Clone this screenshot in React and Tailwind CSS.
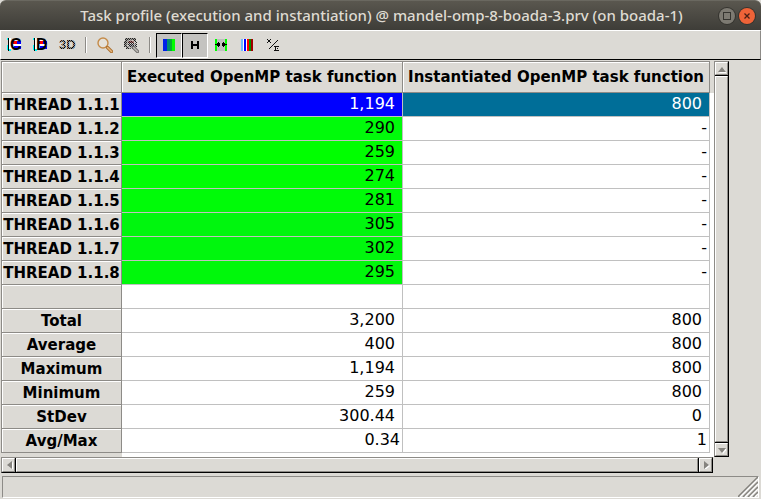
import React from "react";

const rows = [
  { label: "THREAD 1.1.1", cells: ["1,194", "800"], fills: ["bg-[#0000ff] text-white", "bg-[#006e98] text-white"] },
  { label: "THREAD 1.1.2", cells: ["290", "-"], fills: ["bg-[#00fb0a]", "bg-white"] },
  { label: "THREAD 1.1.3", cells: ["259", "-"], fills: ["bg-[#00ff00]", "bg-white"] },
  { label: "THREAD 1.1.4", cells: ["274", "-"], fills: ["bg-[#00fd05]", "bg-white"] },
  { label: "THREAD 1.1.5", cells: ["281", "-"], fills: ["bg-[#00fb08]", "bg-white"] },
  { label: "THREAD 1.1.6", cells: ["305", "-"], fills: ["bg-[#00f60e]", "bg-white"] },
  { label: "THREAD 1.1.7", cells: ["302", "-"], fills: ["bg-[#00f70d]", "bg-white"] },
  { label: "THREAD 1.1.8", cells: ["295", "-"], fills: ["bg-[#00f80b]", "bg-white"] },
  { label: "", cells: ["", ""] },
  { label: "Total", cells: ["3,200", "800"] },
  { label: "Average", cells: ["400", "800"] },
  { label: "Maximum", cells: ["1,194", "800"] },
  { label: "Minimum", cells: ["259", "800"] },
  { label: "StDev", cells: ["300.44", "0"] },
  { label: "Avg/Max", cells: ["0.34", "1"], tight: true },
];

function Icon({ children }) {
  return (
    <svg width="16" height="16" viewBox="0 0 16 16" shapeRendering="crispEdges" aria-hidden="true">
      {children}
    </svg>
  );
}

function LetterIcon({ letter }) {
  return (
    <Icon>
      <path d="M0 1h1v2h-1zM0 8h1v5h-1zM2 12h2v2h-2z" fill="#00ffff" />
      <path d="M1 1h1v13h-1z" fill="#000" />
      <path d="M2 1h2v11h-2zM4 3h10v9h-10z" fill="#fff" />
      <path d="M6 4h4v3h-4z" fill="#ff0000" />
      <path d="M10 4h4v3h-4zM7 9h7v3h-7z" fill="#0000ff" />
      <text x="3" y="13" fontFamily="Liberation Sans" fontWeight="bold" fontSize="16">
        {letter}
      </text>
    </Icon>
  );
}

function ThreeDIcon() {
  return (
    <svg width="18" height="16" viewBox="0 0 18 16" aria-hidden="true">
      <defs>
        <pattern id="dither" width="2" height="2" patternUnits="userSpaceOnUse">
          <rect width="2" height="2" fill="#8b8983" />
          <rect width="1" height="1" fill="#000" />
          <rect x="1" y="1" width="1" height="1" fill="#000" />
        </pattern>
      </defs>
      <text x="1" y="12" fontFamily="Liberation Sans" fontWeight="bold" fontSize="13" fill="url(#dither)">
        3D
      </text>
    </svg>
  );
}

function Magnifier({ muted }) {
  return (
    <svg width="16" height="16" viewBox="0 0 16 16" aria-hidden="true">
      {muted && (
        <g shapeRendering="crispEdges">
          <defs>
            <pattern id="dots" width="2" height="2" patternUnits="userSpaceOnUse">
              <rect width="1" height="1" fill="#222" />
              <rect x="1" y="1" width="1" height="1" fill="#222" />
            </pattern>
          </defs>
          <path d="M2 1h11v3h-2v-1h-6v7h3v2h-5v-2h-2v-6h1z" fill="#a3a19d" />
          <path d="M5 3h6v3h-6z" fill="#c07070" />
          <path d="M6 7h7v4h-7z" fill="#a9a9b4" />
          <path d="M2 1h11v3h1v6h-3v2h-8v-2h-2v-6h1z" fill="url(#dots)" />
        </g>
      )}
      {muted ? (
        <circle cx="8" cy="7" r="4" fill="none" stroke="#c9c7c2" strokeWidth="1" />
      ) : (
        <circle cx="6" cy="6" r="5" fill="#e5e1d9" stroke="#c58b49" strokeWidth="1.4" />
      )}
      <path d="M10.5 10.5l4 4" stroke={muted ? "#6b6966" : "#a96b28"} strokeWidth="3.2" strokeLinecap="round" />
      <path d="M10.5 10.5l4 4" stroke={muted ? "#bbb9b4" : "#e6b67c"} strokeWidth="1.6" strokeLinecap="round" />
    </svg>
  );
}

function GradientIcon() {
  return (
    <Icon>
      <path d="M2 2h4v12h-4z" fill="#0020e8" />
      <path d="M6 2h3v12h-3z" fill="#008c70" />
      <path d="M9 2h2v12h-2z" fill="#00b030" />
      <path d="M11 2h3v12h-3z" fill="#00ff00" />
    </Icon>
  );
}

function HorizontalIcon() {
  return (
    <Icon>
      <path d="M4 4h2v3h4v-3h2v8h-2v-3h-4v3h-2z" fill="#000" />
    </Icon>
  );
}

function ArrowsIcon() {
  return (
    <Icon>
      <path d="M4 2h8v12h-8z" fill="#c0c0c0" />
      <path d="M2 2h2v12h-2zM12 2h2v12h-2z" fill="#00ff00" />
      <path d="M2 7h2v-1h1v-1h1v1h1v3h-1v1h-1v-1h-1v-1h-2zM14 7h-2v-1h-1v-1h-1v1h-1v3h1v1h1v-1h1v-1h2z" fill="#000" />
    </Icon>
  );
}

function StripesIcon() {
  return (
    <Icon>
      <path d="M2 2h2v12h-2z" fill="#70b8ff" />
      <path d="M4 2h1v12h-1zM7 2h1v12h-1z" fill="#ffffff" />
      <path d="M5 2h2v12h-2z" fill="#0000ff" />
      <path d="M8 2h2v12h-2z" fill="#ff0000" />
      <path d="M10 2h2v12h-2z" fill="#009000" />
      <path d="M12 2h2v12h-2z" fill="#a00000" />
    </Icon>
  );
}

function FormulaIcon() {
  return (
    <Icon>
      <path
        d="M2 2h1v1h-1zM5 2h1v1h-1zM3 3h2v2h-2zM2 5h1v1h-1zM5 5h1v1h-1zM12 3h1v1h-1zM11 4h1v1h-1zM10 5h1v1h-1zM9 6h1v1h-1zM8 7h1v1h-1zM7 8h1v1h-1zM6 9h1v1h-1zM5 10h1v1h-1zM4 11h1v1h-1zM9 9h5v1h-5zM10 10h1v3h-1zM12 11h1v1h-1zM9 13h5v1h-5z"
        fill="#111"
      />
    </Icon>
  );
}

function ToolButton({ label, pressed, children }) {
  return (
    <button
      type="button"
      aria-label={label}
      aria-pressed={pressed}
      className={
        pressed
          ? "flex h-[25px] w-[26px] items-center justify-center border border-t-black border-l-black border-r-white border-b-white bg-[#c4c3c0] bg-clip-padding"
          : "flex h-[25px] w-[26px] items-center justify-center"
      }
    >
      {children}
    </button>
  );
}

function Separator() {
  return <div className="mx-[5px] h-4 w-0.5 border-l border-[#8d8b87] bg-white" />;
}

function Arrow({ dir }) {
  const paths = {
    up: "M0 7L4 2L8 7z",
    down: "M0 2L4 7L8 2z",
    left: "M7 0L2 4L7 8z",
    right: "M2 0L7 4L2 8z",
  };
  return (
    <svg width="8" height="8" viewBox="0 0 8 8" aria-hidden="true">
      <path d={paths[dir]} fill="#fff" transform="translate(1 1)" />
      <path d={paths[dir]} fill="#85837e" />
    </svg>
  );
}

const raised = "border border-t-white border-l-white border-r-[#8d8b87] border-b-[#8d8b87] bg-[#dcdad5]";

function ScrollBar({ vertical }) {
  return (
    <div
      className={
        vertical
          ? "flex w-[15px] shrink-0 flex-col border border-t-[#8d8b87] border-l-[#8d8b87] border-r-black border-b-black bg-black"
          : "mr-4 flex h-4 border border-t-[#8d8b87] border-l-[#8d8b87] border-r-black border-b-black bg-black"
      }
    >
      <button
        type="button"
        aria-label={vertical ? "Scroll up" : "Scroll left"}
        className={`${raised} flex shrink-0 items-center justify-center ${vertical ? "h-[13px]" : "w-[13px]"}`}
      >
        <Arrow dir={vertical ? "up" : "left"} />
      </button>
      <div className={`${raised} flex-1 ${vertical ? "my-px" : "mx-px"}`} />
      <button
        type="button"
        aria-label={vertical ? "Scroll down" : "Scroll right"}
        className={`${raised} flex shrink-0 items-center justify-center ${vertical ? "h-[13px]" : "w-[13px]"}`}
      >
        <Arrow dir={vertical ? "down" : "right"} />
      </button>
    </div>
  );
}

function ProfileTable() {
  const head = "border-r border-b border-[#8d8b87] bg-[#dcdad5] p-0 text-center text-[15px] leading-5 font-bold whitespace-nowrap shadow-[inset_1px_1px_0_#fff]";
  return (
    <table className="w-full table-fixed border-separate border-spacing-0 border-t border-l border-[#8d8b87]">
      <colgroup>
        <col className="w-[120px]" />
        <col className="w-[281px]" />
        <col />
      </colgroup>
      <thead>
        <tr className="h-[31px]">
          <td className={head} />
          <th scope="col" className={head}>Executed OpenMP task function</th>
          <th scope="col" className={head}>Instantiated OpenMP task function</th>
        </tr>
      </thead>
      <tbody>
        {rows.map((row, i) => (
          <tr key={i} className="h-6">
            <th scope="row" className={head}>{row.label}</th>
            {row.cells.map((value, j) => (
              <td
                key={j}
                className={`border-r border-b border-[#c0c0c0] bg-clip-padding py-0 text-right align-top text-base leading-[22px] ${
                  row.tight || value === "-" ? "pr-0.5" : "pr-[7px]"
                } ${row.fills ? row.fills[j] : "bg-white"}`}
              >
                {value}
              </td>
            ))}
          </tr>
        ))}
      </tbody>
    </table>
  );
}

export default function App() {
  return (
    <div className="flex min-h-screen flex-col bg-[#dcdad5] font-['DejaVu_Sans',sans-serif] text-black">
      <header className="flex h-[30px] items-center rounded-t-md border-t border-[#6a6860] bg-linear-to-b from-[#5a574f] to-[#3e3d38] pr-1.5">
        <div className="w-11 shrink-0" />
        <h1 className="flex-1 text-center font-['Noto_Sans',sans-serif] text-[15px] font-medium whitespace-nowrap text-[#dfdbd2]">
          Task profile (execution and instantiation) @ mandel-omp-8-boada-3.prv (on boada-1)
        </h1>
        <div className="flex shrink-0 gap-1">
          <button type="button" aria-label="Maximize" className="flex size-4 items-center justify-center rounded-full bg-[#7d7a72] ring-1 ring-[#35342f]">
            <span className="size-2 border border-[#35342f]" />
          </button>
          <button type="button" aria-label="Close" className="flex size-4 items-center justify-center rounded-full bg-[#ee6338] ring-1 ring-[#35342f]">
            <svg width="6" height="6" viewBox="0 0 6 6" aria-hidden="true">
              <path d="M0.5 0.5l5 5M5.5 0.5l-5 5" stroke="#4a2015" strokeWidth="1.3" />
            </svg>
          </button>
        </div>
      </header>

      <div role="toolbar" aria-label="Histogram" className="flex h-[30px] items-center border border-t-white border-l-white border-r-[#8d8b87] border-b-black pl-px">
        <ToolButton label="Open control window"><LetterIcon letter="C" /></ToolButton>
        <ToolButton label="Open data window"><LetterIcon letter="D" /></ToolButton>
        <ToolButton label="Open 3D window"><ThreeDIcon /></ToolButton>
        <Separator />
        <ToolButton label="Zoom"><Magnifier /></ToolButton>
        <ToolButton label="Fit zoom"><Magnifier muted /></ToolButton>
        <Separator />
        <ToolButton label="Color" pressed><GradientIcon /></ToolButton>
        <ToolButton label="Horizontal" pressed><HorizontalIcon /></ToolButton>
        <ToolButton label="Hide empty"><ArrowsIcon /></ToolButton>
        <ToolButton label="Semantic colors"><StripesIcon /></ToolButton>
        <ToolButton label="Short labels"><FormulaIcon /></ToolButton>
      </div>

      <main className="flex flex-1 flex-col pt-px pr-8 pl-px">
        <div className="flex">
          <div className="min-w-0 flex-1 bg-linear-to-b from-[#dcdad5] from-[32px] to-white to-[32px] pr-1">
            <ProfileTable />
            <div className="h-1 w-[121px] bg-[#dcdad5]" />
          </div>
          <ScrollBar vertical />
        </div>
        <ScrollBar />
      </main>

      <footer className="mx-0.5 mt-0.5 mb-px flex h-[22px] items-end justify-end border border-t-[#8d8b87] border-l-[#8d8b87] border-r-white border-b-white">
        <svg width="20" height="20" viewBox="0 0 20 20" aria-hidden="true">
          <path d="M0 20L20 0M5 20L20 5M10 20L20 10M15 20L20 15" stroke="#85837e" strokeWidth="1.6" />
          <path d="M2 20L20 2M7 20L20 7M12 20L20 12M17 20L20 17" stroke="#fff" strokeWidth="1.2" />
        </svg>
      </footer>
    </div>
  );
}
